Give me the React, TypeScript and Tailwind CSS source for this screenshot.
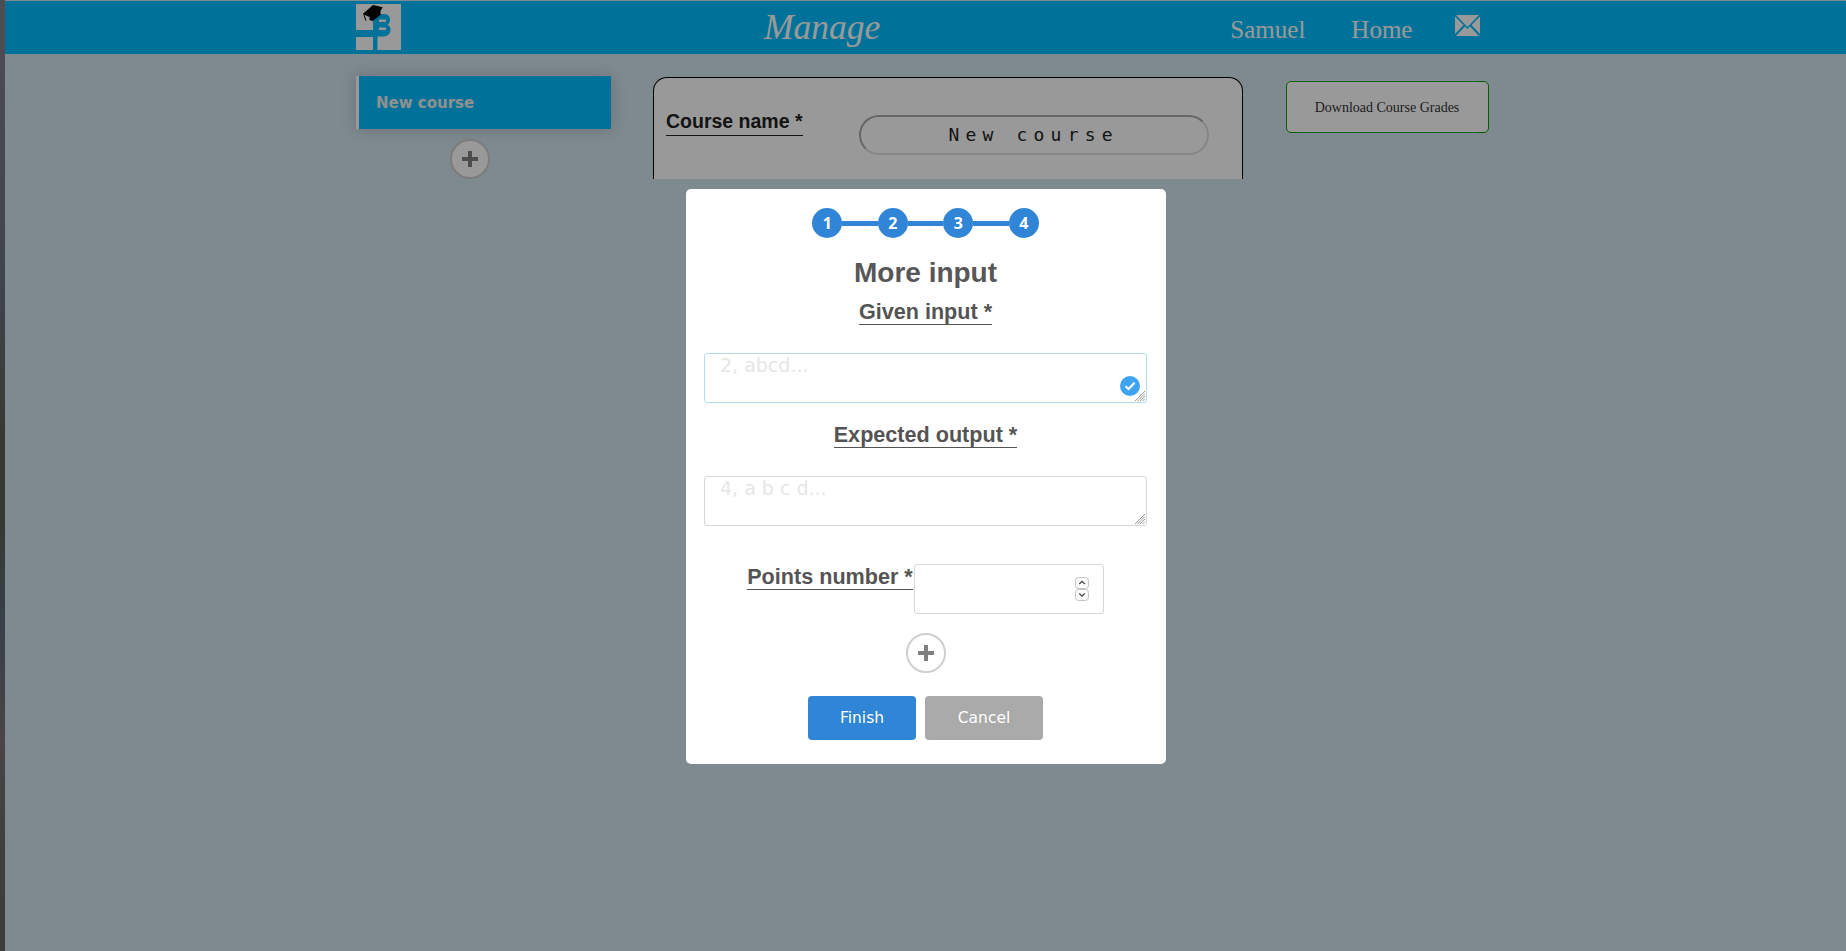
const sans = "font-['Liberation_Sans',Arial,sans-serif]";

function Logo() {
  return (
    <svg width="45" height="46" viewBox="0 0 45 46" className="shrink-0 -mt-px">
      <rect x="0" y="0" width="45" height="46" fill="#fff" />
      {/* blue cross cut out of the square */}
      <rect x="0" y="26" width="17" height="7" fill="#00bfff" />
      <rect x="17" y="10" width="4.5" height="36" fill="#00bfff" />
      <path d="M20 10h8c4 0 6 2.500 6 6 0 2-1 3.500-2.500 4.500 2 1 3 3 3 5 0 4-3 7-7 7h-7.500z" fill="#00bfff" />
      <rect x="23" y="15.500" width="7" height="2.500" fill="#fff" />
      <rect x="23" y="23.500" width="7" height="2.500" fill="#fff" />
      {/* graduation cap */}
      <path d="M6.700 10 17 1 26.700 3.300 24.500 7 15.700 14z" fill="#000" />
      <path d="M13.500 13.500 24.500 6.500 24.500 11 16.500 17 13.500 16z" fill="#000" />
      <path d="M8 10.500 9.800 16.700" stroke="#000" strokeWidth="1" fill="none" />
    </svg>
  );
}

function Envelope() {
  return (
    <svg width="25" height="21" viewBox="0 0 25 21" fill="#fff" className="shrink-0">
      <path d="M1 0h23L12.500 12z" />
      <path d="M0 1.500l8.500 8.500-8.500 9z" />
      <path d="M25 1.500l-8.500 8.500 8.500 9z" />
      <path d="M1 21l9-9.500 2.500 2.500 2.500-2.500 9 9.500z" />
    </svg>
  );
}

function PlusButton({ className }: { className: string }) {
  return (
    <button className={`flex items-center justify-center w-10 h-10 rounded-full border-2 border-[#cfcfcf] bg-white ${className}`}>
      <svg width="16" height="16" viewBox="0 0 16 16" fill="#808080">
        <rect x="0" y="6" width="16" height="4" />
        <rect x="6" y="0" width="4" height="16" />
      </svg>
    </button>
  );
}

function Step({ n }: { n: number }) {
  return (
    <div className="w-[30px] h-[30px] rounded-full bg-[#3085d6] text-white text-[16px] font-bold font-['Noto_Sans',sans-serif] flex items-center justify-center shrink-0">
      {n}
    </div>
  );
}

function StepLine() {
  return <div className="w-[35.500px] h-[5px] bg-[#3085d6] shrink-0" />;
}

function ModalLabel({ children, className = "" }: { children: string; className?: string }) {
  return (
    <label className={`${sans} block font-bold text-[21.600px] pt-[2px] leading-[24px] text-[#545454] border-b border-[#545454] ${className}`}>
      {children}
    </label>
  );
}

function TextBox({ placeholder, border, className = "" }: { placeholder: string; border: string; className?: string }) {
  return (
    <div className={`relative w-[443px] h-[50px] shrink-0 ${className}`}>
      <textarea
        placeholder={placeholder}
        className={`block w-full h-full resize-none rounded-[3px] border ${border} px-[15px] text-[19px] leading-[22px] placeholder:text-[#e6e6e6] outline-none`}
      />
      {/* resize grip */}
      <svg width="10" height="10" viewBox="0 0 10 10" stroke="#6a6a6a" strokeWidth="0.700" className="absolute right-[2px] bottom-[2px] pointer-events-none">
        <path d="M10 0 0 10M10 2.500 2.500 10M10 5 5 10M10 7.500 7.500 10" />
      </svg>
    </div>
  );
}

export default function App() {
  return (
    <div className="relative flex h-screen w-full overflow-hidden bg-[#d4e6f0] font-['DejaVu_Sans',sans-serif]">
      {/* sliver of the page background image */}
      <div className="w-[5px] shrink-0 bg-[linear-gradient(to_bottom,#857f8d_0%,#6a7280_30%,#5f6058_45%,#5c5f58_55%,#5d6a78_65%,#7d7278_78%,#686868_90%,#666666_100%)]" />

      <div className="flex-1 min-w-0">
        {/* Header */}
        <header className="mt-px h-[53px] bg-[#00bfff] flex items-center pl-[351px] text-white font-['Liberation_Serif',serif]">
          <Logo />
          <h1 className="ml-[363px] text-[35.500px] italic leading-none">Manage</h1>
          <a className="ml-[350px] mt-[4px] text-[25px] leading-none">Samuel</a>
          <a className="ml-[46px] mt-[4px] text-[25px] leading-none">Home</a>
          <div className="ml-[43px] -mt-[4px]">
            <Envelope />
          </div>
        </header>

        {/* Page body */}
        <div className="flex items-start pl-[351px] pt-[22px]">
          <aside className="w-[255px] shrink-0">
            <div className="h-[53px] bg-[#00bfff] border-l-[3px] border-white flex items-center pl-[17px] pt-[2px] text-[15px] font-bold text-[#f0f0f0] shadow-[0_0_16px_rgba(0,0,0,0.2)]">
              New course
            </div>
            <PlusButton className="mt-[10px] ml-[94px]" />
          </aside>

          <section className="ml-[42px] mt-px w-[590px] h-[102px] shrink-0 bg-white border border-b-0 border-black rounded-t-[14px] flex items-start pl-3 pt-[33px] overflow-hidden">
            <label className={`${sans} font-bold text-[19.500px] leading-[20px] pb-[4px] text-[#222] border-b border-[#222] shrink-0`}>
              Course name *
            </label>
            <input
              defaultValue="New course"
              className="ml-[56px] mt-[4px] w-[350px] h-[40px] pb-px rounded-full border-2 border-t-[#aaaaaa] border-l-[#aaaaaa] border-r-[#e0e0e0] border-b-[#e0e0e0] text-center font-['DejaVu_Sans_Mono',monospace] text-[18px] tracking-[6.200px] text-[#222] bg-transparent"
            />
          </section>

          <button className="ml-[43px] mt-[5px] w-[203px] h-[52px] pr-px shrink-0 bg-white border border-[#00a000] rounded-[5px] font-['Liberation_Serif',serif] text-[14px] text-[#333]">
            Download Course Grades
          </button>
        </div>
      </div>

      {/* Modal */}
      <div className="absolute inset-0 bg-black/40 flex justify-center items-start pt-[189px] pl-[6px]">
        <div className="relative w-[480px] h-[575px] bg-white rounded-[5px] flex flex-col items-center pt-[19px] pr-px">
          <div className="flex items-center">
            <Step n={1} />
            <StepLine />
            <Step n={2} />
            <StepLine />
            <Step n={3} />
            <StepLine />
            <Step n={4} />
          </div>

          <h2 className={`${sans} mt-[19px] font-bold text-[28px] leading-[32px] text-[#575757]`}>More input</h2>

          <ModalLabel className="mt-[9px]">Given input *</ModalLabel>
          <div className="relative mt-[28px] shrink-0">
            <TextBox placeholder="2, abcd..." border="border-[#b4dbed]" />
            <div className="absolute right-[7px] top-[23px] w-5 h-5 rounded-full bg-[#3fa3f3] flex items-center justify-center pointer-events-none">
              <svg width="12" height="10" viewBox="0 0 12 10" fill="none" stroke="#fff" strokeWidth="2.200">
                <path d="M1.500 5.200 4.500 8 10.500 1.800" />
              </svg>
            </div>
          </div>

          <ModalLabel className="mt-[18px]">Expected output *</ModalLabel>
          <TextBox placeholder="4, a b c d..." border="border-[#d7d7d7]" className="mt-[28px]" />

          <div className="mt-[38px] flex items-start">
            <ModalLabel className="-mt-px">Points number *</ModalLabel>
            <div className="relative ml-px">
              <input
                type="number"
                className="block w-[190px] h-[50px] rounded-[3px] border border-[#d7d7d7] px-4 text-[18px] outline-none [appearance:textfield] [&::-webkit-inner-spin-button]:appearance-none"
              />
              <svg width="14" height="24" viewBox="0 0 14 24" fill="none" className="absolute right-[15px] top-[13px] pointer-events-none">
                <rect x="0.500" y="0.500" width="13" height="11" rx="3" stroke="#c4c4c4" fill="#fbfbfb" />
                <rect x="0.500" y="12.500" width="13" height="11" rx="3" stroke="#c4c4c4" fill="#fbfbfb" />
                <path d="M4.300 7 7 4.300 9.700 7" stroke="#404040" strokeWidth="1.200" />
                <path d="M4.300 16.500 7 19.200 9.700 16.500" stroke="#404040" strokeWidth="1.200" />
              </svg>
            </div>
          </div>

          <PlusButton className="mt-[19px]" />

          <div className="mt-[23px] flex gap-[9px]">
            <button className="w-[108px] h-[44px] pt-px rounded-[4px] bg-[#3085d6] text-white text-[15.500px]">Finish</button>
            <button className="w-[118px] h-[44px] pt-px rounded-[4px] bg-[#aaaaaa] text-white text-[15.500px]">Cancel</button>
          </div>
        </div>
      </div>
    </div>
  );
}
